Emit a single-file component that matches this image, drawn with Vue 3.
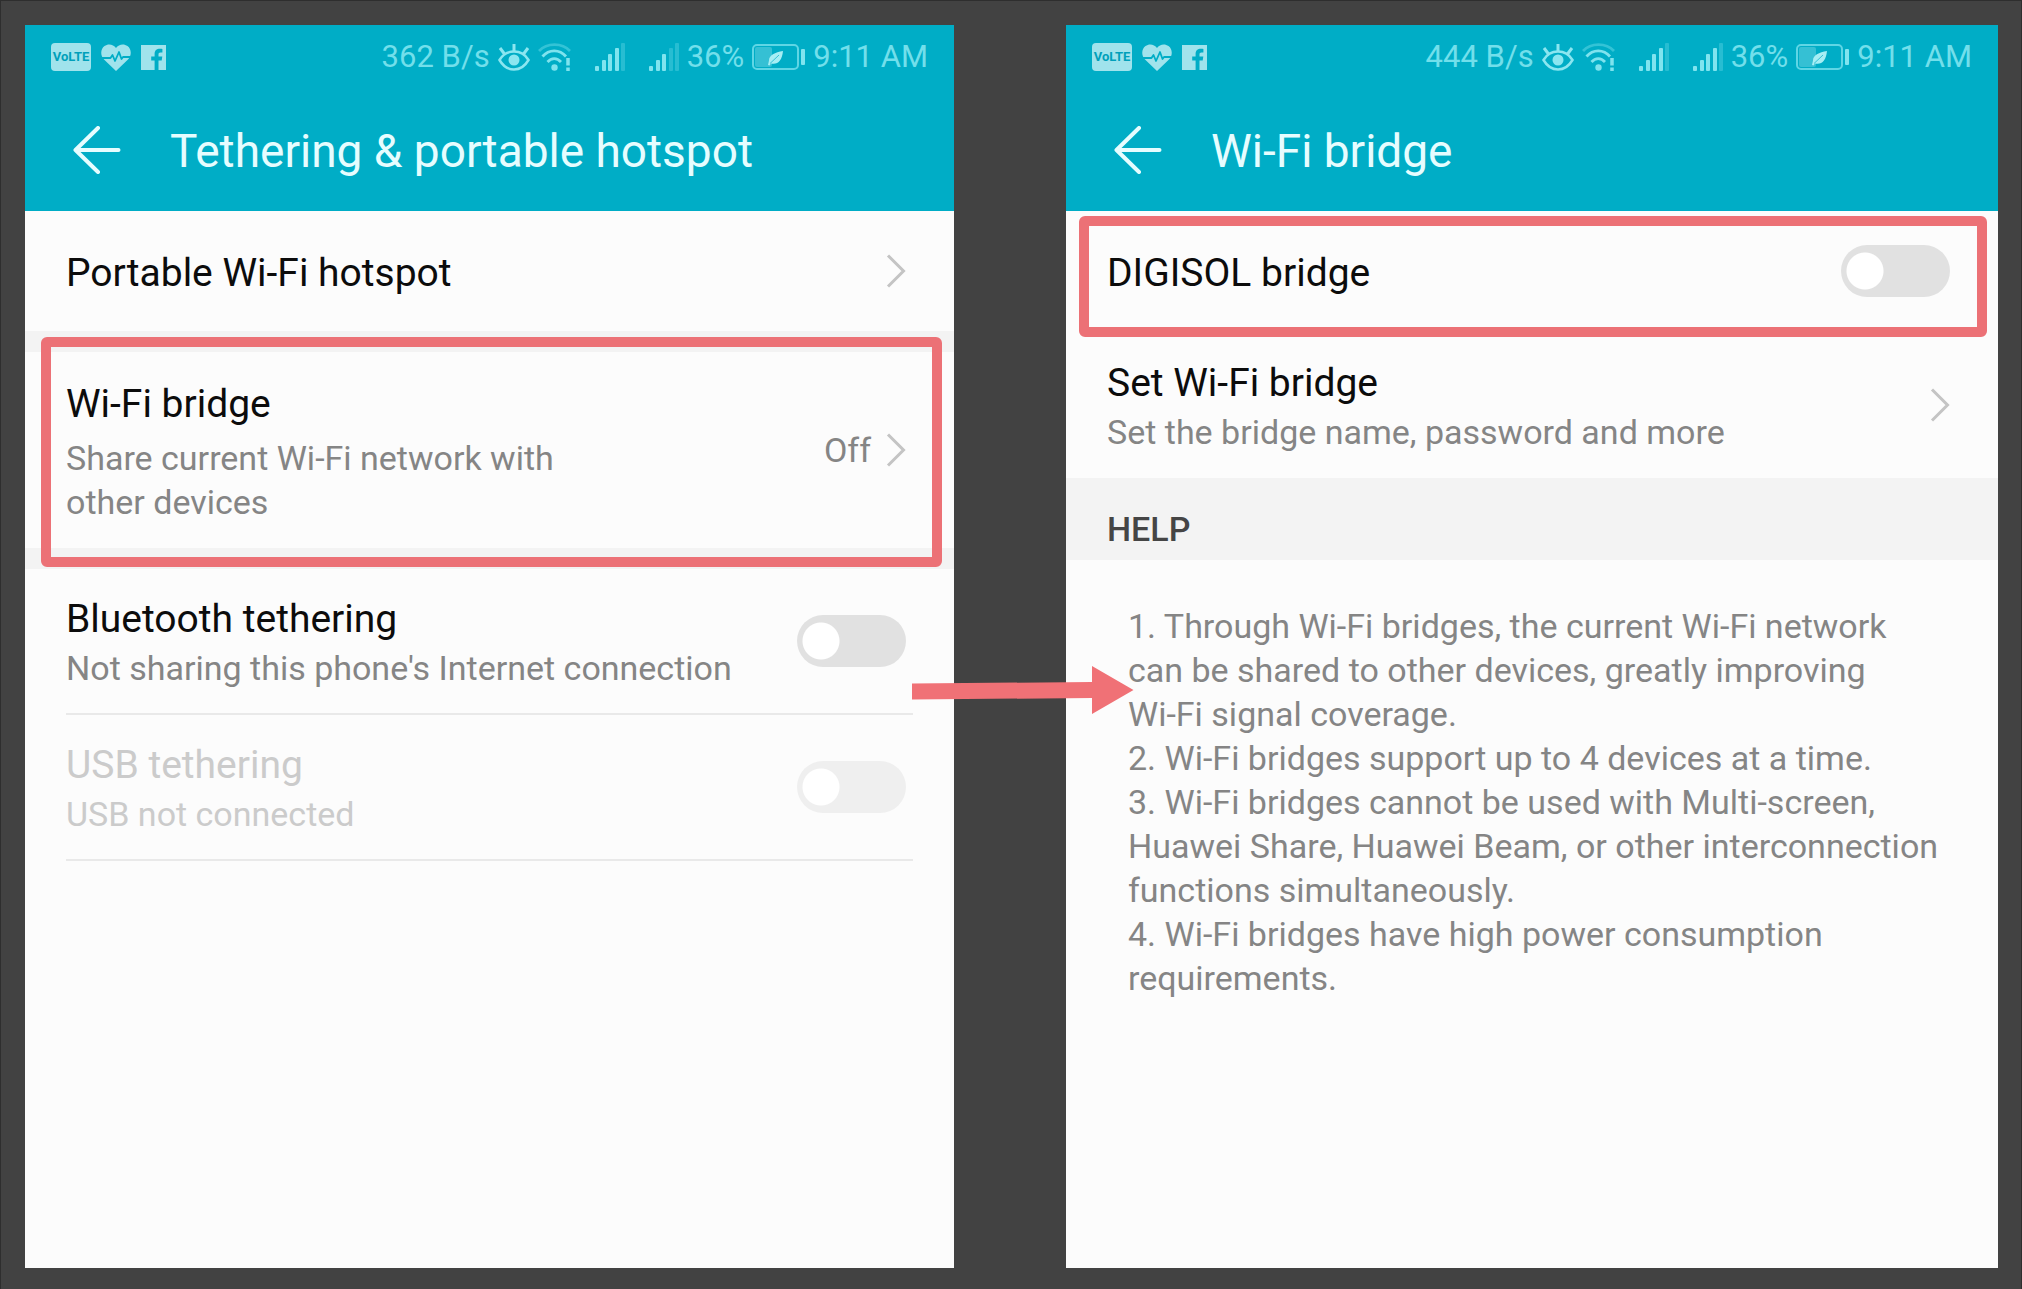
<script setup>
import { ref } from 'vue'

const phones = [
  { id: 'tether', title: 'Tethering & portable hotspot', speed: '362 B/s', sims: [4, 3] },
  { id: 'bridge', title: 'Wi-Fi bridge', speed: '444 B/s', sims: [4, 4] },
]

const bars = [
  { x: 0, h: 5 },
  { x: 7, h: 11 },
  { x: 13, h: 17 },
  { x: 20, h: 23 },
  { x: 26, h: 28 },
]

const help = [
  '1. Through Wi-Fi bridges, the current Wi-Fi network can be shared to other devices, greatly improving\nWi-Fi signal coverage.',
  '2. Wi-Fi bridges support up to 4 devices at a time.',
  '3. Wi-Fi bridges cannot be used with Multi-screen, Huawei Share, Huawei Beam, or other interconnection functions simultaneously.',
  '4. Wi-Fi bridges have high power consumption requirements.',
]

const bluetooth = ref(false)
const usb = ref(false)
const digisol = ref(false)
</script>

<template>
  <main class="board">
    <template v-for="(phone, index) in phones" :key="phone.id">
      <div v-if="index > 0" class="link">
        <svg class="link-arrow" width="222" height="49" viewBox="0 0 222 49" aria-hidden="true">
          <path d="M0 17.500 180 16V0l41.500 24L180 48V32L0 33.500z" fill="#f07176" />
        </svg>
      </div>

      <section class="phone" :class="phone.id">
        <header class="top">
          <div class="status">
            <div class="notices">
              <span class="volte">VoLTE</span>
              <svg width="30" height="27" viewBox="0 0 30 27" aria-hidden="true">
                <path d="M15 27 3 15.500C-1 11.500-.5 5 3.500 2 7.500-1 12.500.5 15 4 17.500.5 22.500-1 26.500 2c4 3 4.500 9.500.5 13.500z" fill="#a0e3ec" />
                <path d="M0 14h9.500l2-3 2.500 6 4-9 2.500 7 1.500-2H30" fill="none" stroke="#00adc6" stroke-width="1.800" stroke-linejoin="round" />
              </svg>
              <svg width="25" height="25" viewBox="0 0 25 25" aria-hidden="true">
                <path d="M0 0h25v25h-7.500v-9.500h3.200l.6-3.900h-3.800V9.300c0-1.200.6-1.900 2-1.900h1.900V3.900c-.6-.1-1.500-.2-2.500-.2-3.300 0-5.300 1.900-5.300 5.200v2.700h-3.400v3.900h3.400V25H0z" fill="#a0e3ec" />
              </svg>
            </div>
            <div class="system">
              <span>{{ phone.speed }}</span>
              <svg width="32" height="28" viewBox="0 0 32 28" fill="none" stroke="#8be6f0" aria-hidden="true">
                <path d="M1.500 17C5 11 10 8.500 16 8.500S27 11 30.500 17C27 23 22 26.500 16 26.500S5 23 1.500 17z" stroke-width="2.500" />
                <path d="M16 8V1M6.500 11 2 5M25.500 11 30 5" stroke-width="3" />
                <circle cx="16" cy="17" r="5.500" fill="#8be6f0" stroke="none" />
              </svg>
              <svg width="33" height="28" viewBox="0 0 33 28" fill="none" stroke="#7fe3ee" stroke-width="2.800" aria-hidden="true">
                <path d="M1 8C9-.5 24-.5 32 8" opacity=".4" />
                <path d="M4.500 13.500c6.500-7.500 17-7.500 23.500 0" />
                <path d="M9.500 19c4-4.500 9.500-4.500 13.500 0" />
                <circle cx="16.500" cy="24.500" r="3.200" fill="#7fe3ee" stroke="none" />
                <path d="M30 15v7.500M30 24.500V28" stroke-width="3.500" />
              </svg>
              <svg v-for="(level, s) in phone.sims" :key="s" class="sim" width="30" height="28" viewBox="0 0 30 28" aria-hidden="true">
                <rect
                  v-for="(bar, b) in bars"
                  :key="b"
                  :x="bar.x"
                  :y="28 - bar.h"
                  width="4"
                  :height="bar.h"
                  rx="1"
                  fill="#80e4ef"
                  :opacity="b < level ? 1 : 0.3"
                />
              </svg>
              <span>36%</span>
              <svg width="53" height="26" viewBox="0 0 53 26" aria-hidden="true">
                <rect x="1" y="1" width="45" height="24" rx="4" fill="none" stroke="#5fd6e5" stroke-width="2" />
                <rect x="3" y="3" width="17" height="20" rx="2" fill="#35c0d4" />
                <rect x="49" y="5" width="4" height="16" rx="1" fill="#80e4ef" />
                <path d="M31 7c-8 1.500-14 4-14 9.500l-1 4.500 1.500.5 1.500-2c7 1.500 11-3 12-12.500z" fill="#a6eef4" />
                <path d="M18 19.500 27 11" stroke="#35c0d4" stroke-width="1" />
              </svg>
              <span>9:11 AM</span>
            </div>
          </div>
          <div class="titlebar">
            <button class="back" type="button" aria-label="Back">
              <svg width="48" height="48" viewBox="0 0 48 48" fill="none" stroke="#e6fdff" stroke-width="4" stroke-linecap="round" stroke-linejoin="round" aria-hidden="true">
                <path d="M25 2 2.500 24 25 46M2.500 24H45.500" />
              </svg>
            </button>
            <h1>{{ phone.title }}</h1>
          </div>
        </header>

        <div v-if="phone.id === 'tether'" class="content">
          <button class="row" type="button">
            <span class="text">
              <span class="name">Portable Wi-Fi hotspot</span>
            </span>
            <svg class="chevron" width="20" height="34" viewBox="0 0 20 34" aria-hidden="true"><path d="M2 1.500 17.500 17 2 32.500" /></svg>
          </button>
          <div class="band"></div>
          <button class="row three marked" type="button">
            <span class="text">
              <span class="name">Wi-Fi bridge</span>
              <span class="note narrow">Share current Wi-Fi network with other devices</span>
            </span>
            <span class="value">Off</span>
            <svg class="chevron" width="20" height="34" viewBox="0 0 20 34" aria-hidden="true"><path d="M2 1.500 17.500 17 2 32.500" /></svg>
          </button>
          <div class="band"></div>
          <label class="row two lined">
            <span class="text">
              <span class="name">Bluetooth tethering</span>
              <span class="note">Not sharing this phone's Internet connection</span>
            </span>
            <input v-model="bluetooth" class="toggle" type="checkbox" />
          </label>
          <label class="row two lined disabled">
            <span class="text">
              <span class="name">USB tethering</span>
              <span class="note">USB not connected</span>
            </span>
            <input v-model="usb" class="toggle" type="checkbox" disabled />
          </label>
        </div>

        <div v-else class="content">
          <label class="row marked tight">
            <span class="text">
              <span class="name">DIGISOL bridge</span>
            </span>
            <input v-model="digisol" class="toggle" type="checkbox" />
          </label>
          <button class="row two" type="button">
            <span class="text">
              <span class="name">Set Wi-Fi bridge</span>
              <span class="note">Set the bridge name, password and more</span>
            </span>
            <svg class="chevron" width="20" height="34" viewBox="0 0 20 34" aria-hidden="true"><path d="M2 1.500 17.500 17 2 32.500" /></svg>
          </button>
          <h2>HELP</h2>
          <div class="help">
            <p v-for="line in help" :key="line">{{ line }}</p>
          </div>
        </div>
      </section>
    </template>
  </main>
</template>

<style>
body {
  margin: 0;
  background: #424242;
}
</style>

<style scoped>
.board {
  box-sizing: border-box;
  min-height: 100vh;
  display: flex;
  padding: 24px 23px 21px 24px;
  border: 1px solid #2e2e2e;
  border-bottom-width: 0;
  background: #424242;
  font-family: Roboto, "Liberation Sans", sans-serif;
}

.phone {
  flex: 929 1 0;
  min-width: 0;
  background: #fcfcfc;
}

.phone.bridge {
  flex-grow: 932;
}

.link {
  position: relative;
  z-index: 1;
  flex: 0 0 112px;
}

.link-arrow {
  position: absolute;
  top: 641px;
  left: -42px;
}

.top {
  background: #00adc6;
}

.status {
  display: flex;
  align-items: center;
  justify-content: space-between;
  height: 64px;
  padding: 0 26px;
}

.notices,
.system {
  display: flex;
  align-items: center;
}

.notices {
  gap: 10px;
}

.volte {
  width: 40px;
  height: 28px;
  border-radius: 4px;
  background: #a0e3ec;
  color: #00a0ba;
  font-size: 13px;
  font-weight: 700;
  line-height: 28px;
  text-align: center;
}

.system {
  gap: 8px;
  color: #72dfeb;
  font-size: 31px;
  line-height: 40px;
  white-space: nowrap;
}

.sim {
  margin-left: 16px;
}

.titlebar {
  display: flex;
  align-items: center;
  gap: 49px;
  height: 122px;
  padding: 0 48px;
}

.back {
  display: block;
  padding: 0;
  border: 0;
  background: none;
}

.back svg {
  display: block;
}

h1 {
  margin: 0;
  padding-top: 2px;
  color: #e6fdff;
  font-size: 46px;
  font-weight: 400;
  line-height: 56px;
  white-space: nowrap;
}

.row {
  position: relative;
  box-sizing: border-box;
  display: flex;
  align-items: center;
  justify-content: space-between;
  width: 100%;
  height: 120px;
  padding: 0 48px 0 41px;
  border: 0;
  background: none;
  color: #0c0c0c;
  font: inherit;
  text-align: left;
}

.two {
  height: 147px;
}

.three {
  height: 196px;
}

.three .text {
  gap: 8px;
}

.lined {
  height: 146px;
  padding-bottom: 2px;
}

.lined::after {
  content: "";
  position: absolute;
  right: 41px;
  bottom: 0;
  left: 41px;
  height: 2px;
  background: #e9e9e9;
}

.marked::before {
  content: "";
  position: absolute;
  inset: -15px 12px -19px 16px;
  border: 10px solid #ec7176;
  border-radius: 6px;
}

.marked.tight::before {
  inset: 5px 11px -6px 13px;
}

.text {
  display: flex;
  flex: 1;
  flex-direction: column;
  gap: 3px;
  padding-top: 3px;
}

.name {
  font-size: 39px;
  line-height: 48px;
}

.note {
  color: #858585;
  font-size: 34px;
  line-height: 44px;
}

.narrow {
  max-width: 520px;
}

.value {
  margin-right: 15px;
  color: #858585;
  font-size: 34px;
  line-height: 44px;
}

.chevron {
  fill: none;
  stroke: #c4c4c4;
  stroke-width: 3;
}

.disabled .name,
.disabled .note {
  color: #cbcbcb;
}

.toggle {
  appearance: none;
  flex: none;
  width: 109px;
  height: 52px;
  margin: 0;
  border-radius: 26px;
  background: radial-gradient(circle at 24px 26px, #fff 18px, #e1e1e1 19px);
}

.toggle:checked {
  background: radial-gradient(circle at 85px 26px, #fff 18px, #00adc6 19px);
}

.toggle:disabled {
  background: radial-gradient(circle at 24px 26px, #fff 18px, #efefef 19px);
}

.band {
  height: 21px;
  background: #f3f3f3;
}

h2 {
  box-sizing: border-box;
  height: 82px;
  margin: 0;
  padding: 29px 41px 0;
  background: #f3f3f3;
  color: #454545;
  font-size: 34px;
  font-weight: 500;
  line-height: 44px;
}

.help {
  padding: 44px 54px 44px 62px;
  color: #858585;
  font-size: 34px;
  line-height: 44px;
}

.help p {
  margin: 0;
  white-space: pre-line;
}
</style>
